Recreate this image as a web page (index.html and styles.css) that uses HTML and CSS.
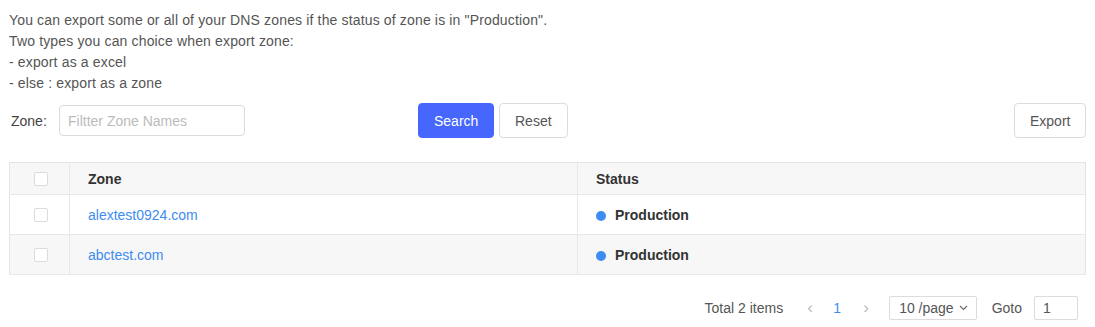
FILE: index.html
```html
<!DOCTYPE html>
<html lang="en">
<head>
    <meta charset="UTF-8">
    <title>DNS Zone Export</title>
    <link rel="stylesheet" href="styles.css">
</head>
<body>
    <div class="page">
        <div class="intro">
            <p>You can export some or all of your DNS zones if the status of zone is in "Production".</p>
            <p>Two types you can choice when export zone:</p>
            <p>- export as a excel</p>
            <p>- else : export as a zone</p>
        </div>

        <div class="toolbar">
            <div class="filter">
                <label for="zone">Zone:</label>
                <input type="text" id="zone" placeholder="Filtter Zone Names">
            </div>
            <button class="btn btn-primary">Search</button>
            <button class="btn">Reset</button>
            <button class="btn btn-export">Export</button>
        </div>

        <table class="zones">
            <thead>
                <tr>
                    <th class="col-check"><span class="checkbox"></span></th>
                    <th class="col-zone">Zone</th>
                    <th>Status</th>
                </tr>
            </thead>
            <tbody>
                <tr>
                    <td class="col-check"><span class="checkbox"></span></td>
                    <td><a href="#">alextest0924.com</a></td>
                    <td><span class="dot"></span><b>Production</b></td>
                </tr>
                <tr class="striped">
                    <td class="col-check"><span class="checkbox"></span></td>
                    <td><a href="#">abctest.com</a></td>
                    <td><span class="dot"></span><b>Production</b></td>
                </tr>
            </tbody>
        </table>

        <div class="pager">
            <span class="total">Total 2 items</span>
            <span class="arrow">&lsaquo;</span>
            <span class="page-num">1</span>
            <span class="arrow">&rsaquo;</span>
            <span class="size">10 /page
                <svg width="9" height="6" viewBox="0 0 9 6"><path d="M1 1l3.5 3.5L8 1" fill="none" stroke="#666" stroke-width="1.1"/></svg>
            </span>
            <span class="goto">Goto</span>
            <input class="goto-input" type="text" value="1">
        </div>
    </div>
</body>
</html>
```

FILE: styles.css
```css
body {
    margin: 0;
    font-family: "Liberation Sans", Arial, sans-serif;
    font-size: 14px;
    color: #555;
    background: white;
}
.page {
    padding: 10px 9px;
}
.intro p {
    margin: 0;
    line-height: 21px;
    letter-spacing: 0.15px;
}
.toolbar {
    display: flex;
    align-items: center;
    margin-top: 9px;
    height: 35px;
}
.filter {
    display: flex;
    align-items: center;
    width: 409px;
}
.filter label {
    margin-left: 2px;
    width: 48px;
    color: #444;
}
.filter input {
    width: 186px;
    height: 31px;
    box-sizing: border-box;
    border: 1px solid #dcdcdc;
    border-radius: 4px;
    padding: 0 8px;
    font-family: inherit;
    font-size: 14px;
    outline: none;
}
.filter input::placeholder {
    color: #bbb;
}
.btn {
    height: 35px;
    padding: 0 15px;
    border: 1px solid #dcdcdc;
    border-radius: 4px;
    background: white;
    color: #555;
    font-family: inherit;
    font-size: 14px;
    margin-right: 5px;
}
.btn-primary {
    background: #4666fd;
    border-color: #4666fd;
    color: white;
    width: 76px;
}
.btn-export {
    margin-left: auto;
    margin-right: 0;
    width: 72px;
}
.zones {
    width: 100%;
    margin-top: 24px;
    border-collapse: collapse;
    border: 1px solid #e4e4e4;
}
.zones th, .zones td {
    text-align: left;
    padding: 0 18px;
    border-left: 1px solid #e8e8e8;
}
.zones th {
    height: 31px;
    background: #f7f7f7;
    color: #333;
    font-weight: bold;
    border-bottom: 1px solid #e8e8e8;
}
.zones td {
    height: 39px;
    border-bottom: 1px solid #e8e8e8;
}
.zones .col-check {
    width: 35px;
    padding: 0 0 0 24px;
    border-left: none;
}
.zones .col-zone {
    width: 471px;
}
.striped td {
    background: #f7f7f7;
}
.checkbox {
    display: block;
    width: 12px;
    height: 12px;
    border: 1px solid #dcdcdc;
    border-radius: 2px;
    background: white;
}
.zones a {
    color: #3d8cf0;
    text-decoration: none;
}
.zones b {
    color: #333;
}
.dot {
    display: inline-block;
    width: 10px;
    height: 10px;
    border-radius: 50%;
    background: #3d8cf0;
    margin-right: 9px;
    vertical-align: -1px;
}
.pager {
    display: flex;
    justify-content: flex-end;
    align-items: center;
    margin-top: 21px;
    padding-right: 8px;
    color: #555;
}
.total {
    margin-right: 17px;
}
.arrow {
    color: #bbb;
    font-size: 17px;
    width: 20px;
    text-align: center;
}
.page-num {
    color: #3d8cf0;
    width: 18px;
    text-align: center;
    margin: 0 10px 0 8px;
}
.size {
    display: flex;
    align-items: center;
    gap: 5px;
    height: 24px;
    box-sizing: border-box;
    border: 1px solid #dcdcdc;
    border-radius: 2px;
    padding: 0 8px 0 9px;
    margin-left: 13px;
}
.goto {
    margin: 0 12px 0 15px;
}
.goto-input {
    width: 44px;
    height: 24px;
    box-sizing: border-box;
    border: 1px solid #dcdcdc;
    border-radius: 2px;
    padding: 0 8px;
    font-family: inherit;
    font-size: 14px;
    color: #555;
}
```
